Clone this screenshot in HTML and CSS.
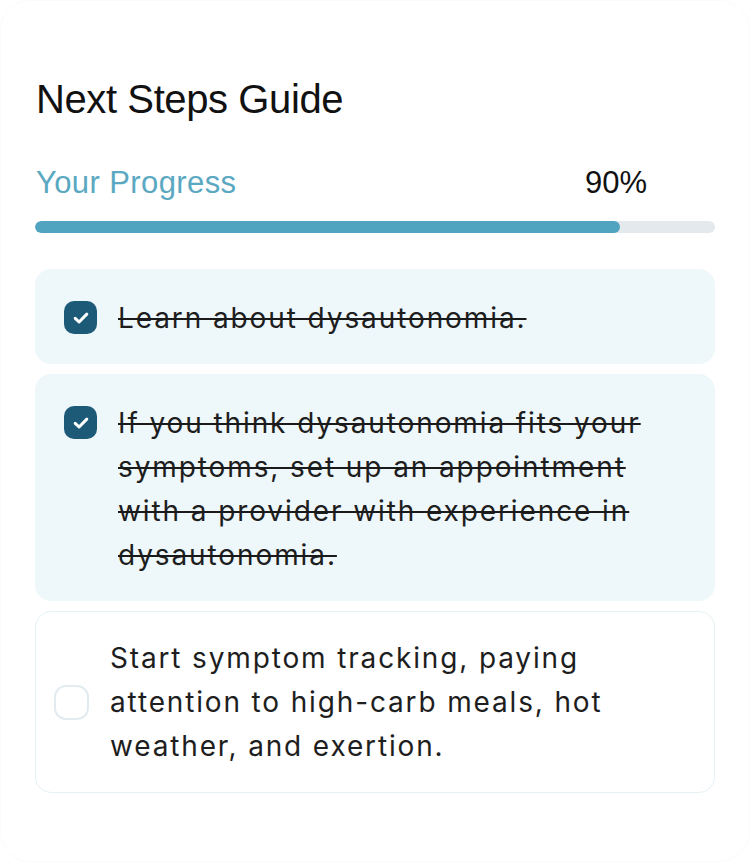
FILE: index.html
```html
<!DOCTYPE html>
<html lang="en">

<head>
    <meta charset="UTF-8">
    <meta name="viewport" content="width=device-width, initial-scale=1.0">
    <title>Next Steps Guide</title>
    <link rel="stylesheet" href="styles.css">
</head>

<body>
    <div class="panel">
        <h1 class="title">Next Steps Guide</h1>

        <div class="progressRow">
            <span class="progressLabel">Your Progress</span>
            <span class="progressValue">90%</span>
        </div>
        <div class="progressTrack">
            <div class="progressFill"></div>
        </div>

        <div class="steps">
            <div class="step done">
                <span class="checkbox checked">
                    <svg viewBox="0 0 20 20" width="20" height="20">
                        <path d="M4.2 10.3l3.9 3.7 7.7-7.9" fill="none" stroke="#fff" stroke-width="3" stroke-linecap="round" stroke-linejoin="round" />
                    </svg>
                </span>
                <p class="stepText">Learn about dysautonomia.</p>
            </div>

            <div class="step done">
                <span class="checkbox checked">
                    <svg viewBox="0 0 20 20" width="20" height="20">
                        <path d="M4.2 10.3l3.9 3.7 7.7-7.9" fill="none" stroke="#fff" stroke-width="3" stroke-linecap="round" stroke-linejoin="round" />
                    </svg>
                </span>
                <p class="stepText">If you think dysautonomia fits your symptoms, set up an appointment with a provider with experience in dysautonomia.</p>
            </div>

            <div class="step todo">
                <span class="checkbox"></span>
                <p class="stepText">Start symptom tracking, paying attention to high-carb meals, hot weather, and exertion.</p>
            </div>
        </div>
    </div>
</body>

</html>
```

FILE: styles.css
```css
body {
    margin: 0;
    padding: 0;
    background-color: #fff;
    font-family: Inter, "Liberation Sans", sans-serif;
    color: #1a1a1a;
}

.panel {
    height: 862px;
    border: 1px solid #fbfbfb;
    border-radius: 30px;
    padding: 0 34px;
    box-sizing: border-box;
}

.title {
    font-family: "Liberation Sans", Arial, sans-serif;
    font-weight: 400;
    font-size: 40px;
    line-height: 48px;
    letter-spacing: -0.4px;
    color: #111;
    margin: 74px 0 0 1px;
}

.progressRow {
    width: 90%;
    display: flex;
    justify-content: space-between;
    margin-top: 40px;
    font-family: "Liberation Sans", Arial, sans-serif;
    font-size: 31px;
    line-height: 40px;
}

.progressLabel {
    color: #5aa8c1;
    margin-left: 1px;
    letter-spacing: 0.4px;
}

.progressValue {
    color: #111;
}

.progressTrack {
    height: 12px;
    margin-top: 18px;
    border-radius: 6px;
    background-color: #e3e9ed;
    overflow: hidden;
}

.progressFill {
    width: 86%;
    height: 100%;
    border-radius: 6px;
    background-color: #50a4bf;
}

.steps {
    display: flex;
    flex-direction: column;
    gap: 10px;
    margin-top: 36px;
}

.step {
    display: flex;
    align-items: flex-start;
    gap: 21px;
    border-radius: 16px;
    box-sizing: border-box;
}

.step.done {
    background-color: #eef7fa;
    padding: 27px 29px 24px 29px;
}

.step.todo {
    align-items: center;
    background-color: #fff;
    border: 1px solid #e6f1f5;
    padding: 24px 29px 24px 18px;
}

.checkbox {
    flex: none;
    width: 33px;
    height: 33px;
    border-radius: 10px;
    box-sizing: border-box;
    display: flex;
    align-items: center;
    justify-content: center;
}

.checkbox svg {
    flex: none;
    display: block;
}

.checkbox.checked {
    background-color: #1c5a78;
    margin-top: 5px;
}

.todo .checkbox {
    width: 35px;
    height: 35px;
    border: 2px solid #e2ebef;
    border-radius: 12px;
}

.stepText {
    margin: 0;
    font-size: 28px;
    line-height: 44px;
    letter-spacing: 1.85px;
    color: #1e1e1e;
}

.done .stepText {
    letter-spacing: 1.9px;
    text-decoration: line-through;
    text-decoration-thickness: 2px;
    text-decoration-color: #1a1a1a;
}
```
